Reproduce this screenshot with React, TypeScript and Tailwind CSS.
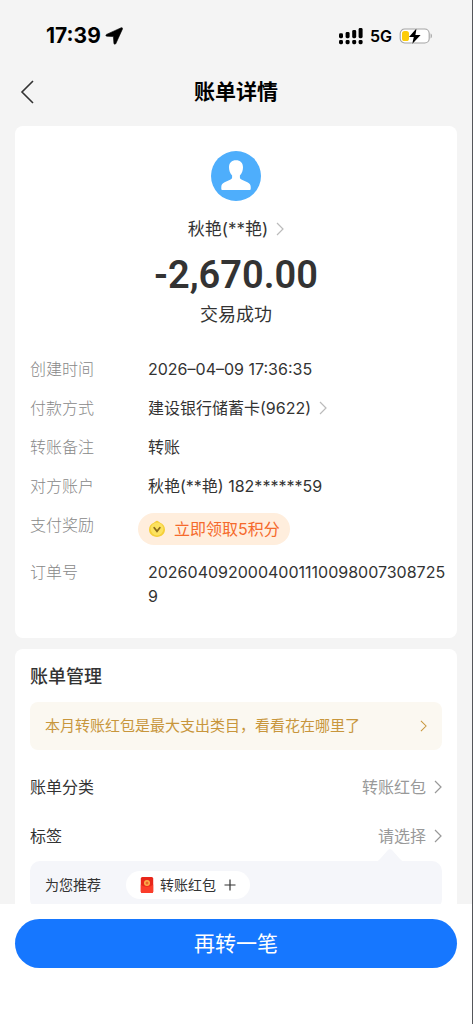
import React from 'react'
import clsx from 'clsx'

interface ChevronProps {
  className?: string
}

const Chevron = ({ className }: ChevronProps) => (
  <svg viewBox="0 0 8 14" fill="none" stroke="currentColor" className={clsx('shrink-0', className)} aria-hidden="true">
    <path d="M1 1l6 6-6 6" strokeWidth="1.2" />
  </svg>
)

const StatusBar = () => (
  <div className="flex h-[70px] items-center justify-between pt-px pr-[39px] pl-[46px] text-black">
    <div className="flex items-center gap-1">
      <span className="text-[21px] leading-7 font-bold">17:39</span>
      <svg viewBox="0 0 18 18" className="size-[18px]" aria-hidden="true">
        <path
          d="M16.3.7L1.500 7.400C.5 7.900.7 9.100 1.800 9.200l6.600.4.500 6.700c.1 1.100 1.500 1.300 2 .2L17.500 1.900c.3-.8-.4-1.500-1.200-1.200z"
          fill="currentColor"
          stroke="currentColor"
          strokeWidth=".6"
        />
      </svg>
    </div>
    <div className="flex items-center gap-[7px]">
      <svg viewBox="0 0 24 18" className="h-[18px] w-6" fill="currentColor" aria-hidden="true">
        <rect x="0" y="6.2" width="4" height="5" rx="1.4" />
        <rect x="6.6" y="5" width="4" height="6.2" rx="1.4" />
        <rect x="13.2" y="3" width="4" height="8.2" rx="1.4" />
        <rect x="19.6" y="1" width="4" height="10.2" rx="1.4" />
        <rect x="0" y="13" width="4" height="4.2" rx="1.4" />
        <rect x="6.6" y="13" width="4" height="4.2" rx="1.4" />
        <rect x="13.2" y="13" width="4" height="4.2" rx="1.4" />
        <rect x="19.6" y="13" width="4" height="4.2" rx="1.4" />
      </svg>
      <span className="text-base font-semibold">5G</span>
      <svg viewBox="0 0 34 18" className="h-[18px] w-[34px]" aria-hidden="true">
        <rect x="1.2" y="2" width="29" height="14" rx="4.5" fill="#fff" stroke="#a3a3a3" strokeWidth="1.1" />
        <path d="M31.6 6.6c1.7.5 1.7 4.3 0 4.8z" fill="#a3a3a3" />
        <rect x="3" y="4" width="7" height="10" rx="2.6" fill="#fccc0a" />
        <path d="M17.6 1.2L10 10h4.8l-1.6 7L21.6 8h-5.2z" fill="#000" stroke="#fff" strokeWidth="1" paintOrder="stroke" />
      </svg>
    </div>
  </div>
)

const Avatar = () => (
  <svg viewBox="0 0 50 50" className="size-[50px]" aria-hidden="true">
    <circle cx="25" cy="25" r="25" fill="#4eaefc" />
    <path
      d="M25 9.300c-4.300 0-7 2.700-7 6.900 0 3.200 1 6.300 3.100 8.300v2c0 1-.7 1.700-2 2.300l-5.500 2.500c-2.400 1.100-3.300 2.600-3.300 4.800v1.700c0 .9.400 1.300 1.300 1.300h26.800c.9 0 1.300-.4 1.300-1.300v-1.700c0-2.200-.9-3.700-3.300-4.800l-5.500-2.500c-1.300-.6-2-1.300-2-2.300v-2c2.100-2 3.100-5.100 3.100-8.300 0-4.200-2.700-6.900-7-6.900z"
      fill="#fff"
    />
  </svg>
)

const Coin = () => (
  <svg viewBox="0 0 18 18" className="size-[18px]" aria-hidden="true">
    <path
      d="M9 .8c1.2 0 1.8 1.2 3.2 1.9C14.9 3.9 17 6.2 17 9.6 17 14 13.6 17 9 17s-8-3-8-7.400C1 6.200 3.100 3.900 5.800 2.700 7.200 2 7.800.8 9 .8z"
      fill="#f5cf3a"
    />
    <circle cx="9" cy="9" r="6.4" fill="#fce25f" />
    <path d="M6.200 7.800L9 11.300l2.800-3.500" fill="none" stroke="#8a6a1c" strokeWidth="1.800" strokeLinecap="round" />
  </svg>
)

const RedPacket = () => (
  <svg viewBox="0 0 14 18" className="h-[18px] w-3.5" aria-hidden="true">
    <rect x=".8" y="1" width="12.4" height="16" rx="1.5" fill="#e8261a" />
    <path d="M.8 8.500c3 3 9.400 3 12.400 0v7a1.500 1.500 0 01-1.500 1.500H2.300A1.500 1.500 0 01.8 15.500z" fill="#fb3d2a" />
    <circle cx="7" cy="7" r="3" fill="#fbb04a" />
    <circle cx="7" cy="7" r="1.5" fill="#f0602c" />
  </svg>
)

interface DetailRowProps {
  label: string
  children: React.ReactNode
}

const DetailRow = ({ label, children }: DetailRowProps) => (
  <div className="flex items-start leading-6">
    <dt className="w-[118px] shrink-0 font-light text-[#888]">{label}</dt>
    <dd className="min-w-0 flex-1 break-all text-[#333]">{children}</dd>
  </div>
)

interface SettingRowProps {
  label: string
  value: string
}

const SettingRow = ({ label, value }: SettingRowProps) => (
  <button type="button" className="flex w-full items-center justify-between leading-6">
    <span className="text-[#333]">{label}</span>
    <span className="flex items-center gap-2 text-[#999]">
      {value}
      <Chevron className="h-3.5 w-2" />
    </span>
  </button>
)

export default function App() {
  return (
    <div className="flex h-screen flex-col border-r border-[#55565a] bg-[#f4f4f4] font-['Inter','Noto_Sans_CJK_SC',sans-serif] text-base">
      <StatusBar />
      <header className="grid h-14 grid-cols-[1fr_auto_1fr] items-center px-5 pb-3">
        <button type="button" aria-label="返回" className="w-fit text-[#333]">
          <svg viewBox="0 0 14 24" fill="none" stroke="currentColor" className="h-6 w-3.5" aria-hidden="true">
            <path d="M13 1L2 12l11 11" strokeWidth="1.6" />
          </svg>
        </button>
        <h1 className="text-[21px] leading-8 font-bold text-black">账单详情</h1>
      </header>

      <main className="flex-1 overflow-y-auto px-[15px] [scrollbar-width:none]">
        <section className="rounded-lg bg-white pt-[25px] pr-2.5 pb-[30px] pl-[15px]">
          <div className="flex flex-col items-center pr-[5px] text-[#333]">
            <Avatar />
            <a href="#payee" className="mt-4 flex items-center gap-2 text-[17px] leading-6">
              秋艳(**艳)
              <Chevron className="h-3.5 w-2 text-[#bbb]" />
            </a>
            <p className="mt-3.5 font-[Roboto] text-[38px] leading-10 font-semibold">-2,670.00</p>
            <p className="mt-2 text-lg leading-6">交易成功</p>
          </div>

          <dl className="mt-[30px] flex flex-col gap-[15px]">
            <DetailRow label="创建时间">2026–04–09 17:36:35</DetailRow>
            <DetailRow label="付款方式">
              <a href="#card" className="flex items-center gap-2">
                建设银行储蓄卡(9622)
                <Chevron className="h-3.5 w-2 text-[#bbb]" />
              </a>
            </DetailRow>
            <DetailRow label="转账备注">转账</DetailRow>
            <DetailRow label="对方账户">秋艳(**艳) 182******59</DetailRow>
            <DetailRow label="支付奖励">
              <button
                type="button"
                className="-ml-2.5 flex h-8 items-center gap-2 rounded-full bg-[#ffeedd] px-2.5 text-[#f56a2c]"
              >
                <Coin />
                立即领取5积分
              </button>
            </DetailRow>
            <DetailRow label="订单号">20260409200040011100980073087259</DetailRow>
          </dl>
        </section>

        <section className="mt-[11px] rounded-lg bg-white px-[15px] pt-4 pb-6">
          <h2 className="text-lg leading-6 font-medium text-[#333]">账单管理</h2>
          <a
            href="#analysis"
            className="mt-[13px] flex h-12 items-center justify-between rounded-lg bg-[#fbf8f1] px-[15px] text-[15px] text-[#c8963c]"
          >
            本月转账红包是最大支出类目，看看花在哪里了
            <Chevron className="h-3 w-[7px]" />
          </a>
          <div className="mt-[25px] flex flex-col gap-[25px]">
            <SettingRow label="账单分类" value="转账红包" />
            <SettingRow label="标签" value="请选择" />
          </div>
          <div className="relative mt-[13px] flex h-12 items-center gap-[25px] rounded-[10px] bg-[#f5f6fa] px-[15px] text-sm text-[#333]">
            <svg viewBox="0 0 32 14" className="absolute -top-[13px] right-9 h-3.5 w-8" aria-hidden="true">
              <path d="M0 14c3 0 4-1 6-3l7.5-8.500c1.500-2 3.500-2 5 0L26 11c2 2 3 3 6 3z" fill="#f5f6fa" />
            </svg>
            <span>为您推荐</span>
            <button type="button" className="flex h-7 items-center gap-1.5 rounded-full bg-white px-3.5">
              <RedPacket />
              转账红包
              <svg viewBox="0 0 12 12" stroke="currentColor" className="ml-0.5 size-3" aria-hidden="true">
                <path d="M6 .5v11M.5 6h11" strokeWidth="1.2" />
              </svg>
            </button>
          </div>
        </section>
      </main>

      <footer className="h-[120px] shrink-0 bg-white px-[15px] pt-[15px]">
        <button type="button" className="h-[49px] w-full rounded-full bg-[#1677ff] text-[21px] text-white">
          再转一笔
        </button>
      </footer>
    </div>
  )
}
